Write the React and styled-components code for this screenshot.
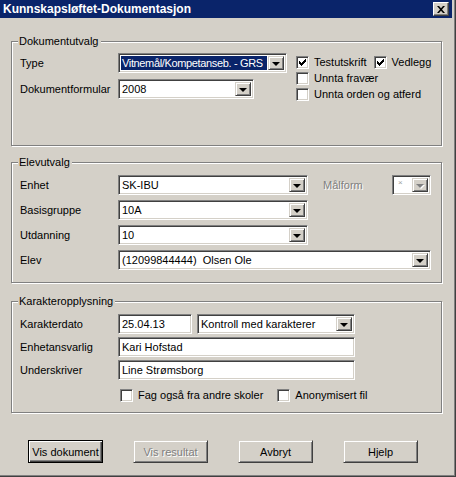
import React from 'react';
import styled, { createGlobalStyle } from 'styled-components';

const GlobalStyle = createGlobalStyle`
  html, body {
    margin: 0;
    padding: 0;
    background: #d4d0c8;
  }
  body {
    font-family: "Liberation Sans", Arial, sans-serif;
    font-size: 11px;
    color: #000;
  }
`;

const Window = styled.div`
  width: 456px;
  height: 477px;
  box-sizing: border-box;
  background: #d4d0c8;
  border-right: 1px solid #404040;
  border-bottom: 1px solid #404040;
  box-shadow: inset -1px -1px 0 #808080;
  display: flex;
  flex-direction: column;
  padding-right: 3px;
`;

const TitleBar = styled.div`
  height: 18px;
  background: #0a246a;
  display: flex;
  align-items: center;
  justify-content: space-between;
  padding: 0 3px 0 3px;
`;

const Title = styled.span`
  color: #fff;
  font-weight: bold;
  font-size: 12px;
`;

const CloseBtn = styled.div`
  width: 16px;
  height: 14px;
  box-sizing: border-box;
  background: #d4d0c8;
  border-top: 1px solid #fff;
  border-left: 1px solid #fff;
  border-right: 1px solid #404040;
  border-bottom: 1px solid #404040;
  box-shadow: inset -1px -1px 0 #808080;
  display: flex;
  align-items: center;
  justify-content: center;
`;

const Content = styled.div`
  padding: 23px 0 0 11px;
  display: flex;
  flex-direction: column;
`;

const Group = styled.div`
  position: relative;
  width: 431px;
  height: ${p => p.$h}px;
  box-sizing: border-box;
  border: 1px solid #808080;
  box-shadow: inset 1px 1px 0 #fff, 1px 1px 0 #fff;
  margin-bottom: ${p => p.$mb || 0}px;
  padding: ${p => p.$pt}px 0 0 8px;
`;

const Legend = styled.span`
  position: absolute;
  top: -7px;
  left: 6px;
  padding: 0 2px 0 1px;
  background: #d4d0c8;
  line-height: 13px;
`;

const GroupRow = styled.div`
  display: flex;
  align-items: flex-start;
`;

const Form = styled.div`
  display: grid;
  grid-template-columns: ${p => p.$cols};
  row-gap: ${p => p.$gap}px;
  grid-auto-rows: 20px;
  align-items: center;
`;

const Label = styled.span`
  white-space: nowrap;
  color: ${p => (p.$disabled ? '#808080' : '#000')};
  text-shadow: ${p => (p.$disabled ? '1px 1px 0 #fff' : 'none')};
`;

const Spacer = styled.span`
  grid-column: ${p => p.$span || 'auto'};
`;

const Field = styled.div`
  grid-column: ${p => p.$span || 'auto'};
  width: ${p => (p.$w ? `${p.$w}px` : 'auto')};
  height: 20px;
  box-sizing: border-box;
  background: #fff;
  border-top: 1px solid #808080;
  border-left: 1px solid #808080;
  border-right: 1px solid #fff;
  border-bottom: 1px solid #fff;
  box-shadow: inset 1px 1px 0 #404040, inset -1px -1px 0 #d4d0c8;
  display: flex;
  align-items: stretch;
  padding: 2px;
`;

const FieldText = styled.div`
  flex: 1;
  min-width: 0;
  display: flex;
  align-items: center;
  padding-left: 1px;
  white-space: nowrap;
  overflow: hidden;
`;

const Highlight = styled.span`
  flex: 1;
  min-width: 0;
  display: flex;
  align-items: center;
  padding-left: 1px;
  margin-right: 1px;
  background: #0a246a;
  color: #fff;
  white-space: nowrap;
  overflow: hidden;
  letter-spacing: -0.35px;
`;

const Tiny = styled.span`
  font-size: 8px;
  color: #a0a0a0;
  align-self: flex-start;
  padding-left: 2px;
`;

const DropBtn = styled.div`
  width: 16px;
  flex: none;
  box-sizing: border-box;
  background: #d4d0c8;
  border-top: 1px solid #d4d0c8;
  border-left: 1px solid #d4d0c8;
  border-right: 1px solid #404040;
  border-bottom: 1px solid #404040;
  box-shadow: inset 1px 1px 0 #fff, inset -1px -1px 0 #808080;
  display: flex;
  align-items: center;
  justify-content: center;
`;

const Arrow = styled.span`
  width: 0;
  height: 0;
  border-left: 4px solid transparent;
  border-right: 4px solid transparent;
  border-top: 4px solid ${p => (p.$disabled ? '#808080' : '#000')};
  margin-top: 1px;
  filter: ${p => (p.$disabled ? 'drop-shadow(1px 1px 0 #fff)' : 'none')};
`;

const Checks = styled.div`
  display: flex;
  flex-direction: column;
  margin-left: 9px;
  padding-top: 1px;
`;

const CheckRow = styled.div`
  display: flex;
  align-items: center;
  height: 16px;
  grid-column: ${p => p.$span || 'auto'};
  align-self: ${p => (p.$end ? 'end' : 'auto')};
  padding-left: ${p => p.$pl || 0}px;
`;

const CheckItem = styled.label`
  display: flex;
  align-items: center;
  gap: 5px;
  margin-right: ${p => p.$mr || 0}px;
  white-space: nowrap;
`;

const Box = styled.span`
  width: 13px;
  height: 13px;
  box-sizing: border-box;
  background: #fff;
  border-top: 1px solid #808080;
  border-left: 1px solid #808080;
  border-right: 1px solid #fff;
  border-bottom: 1px solid #fff;
  box-shadow: inset 1px 1px 0 #404040, inset -1px -1px 0 #d4d0c8;
  display: flex;
  align-items: center;
  justify-content: center;
`;

const Buttons = styled.div`
  display: flex;
  gap: 30px;
  padding-left: 17px;
  margin-top: 27px;
`;

const Button = styled.div`
  width: 75px;
  height: 23px;
  box-sizing: border-box;
  background: #d4d0c8;
  border: 1px solid ${p => (p.$default ? '#000' : '#d4d0c8')};
  border-right-color: ${p => (p.$default ? '#000' : '#404040')};
  border-bottom-color: ${p => (p.$default ? '#000' : '#404040')};
  box-shadow: ${p =>
    p.$default
      ? 'inset 1px 1px 0 #fff, inset -1px -1px 0 #404040, inset -2px -2px 0 #808080'
      : 'inset 1px 1px 0 #fff, inset -1px -1px 0 #808080'};
  display: flex;
  align-items: center;
  justify-content: center;
  color: ${p => (p.$disabled ? '#808080' : '#000')};
  text-shadow: ${p => (p.$disabled ? '1px 1px 0 #fff' : 'none')};
`;

function Check({ checked }) {
  return (
    <Box>
      {checked && (
        <svg width="7" height="7" viewBox="0 0 7 7">
          <path d="M0 2h1v1h1v1h1v-1h1v-1h1v-1h1v-1h1v3h-1v1h-1v1h-1v1h-1v1h-1v-1h-1v-1h-1z" fill="#000" />
        </svg>
      )}
    </Box>
  );
}

function Combo({ children, span, w, highlight, disabled }) {
  return (
    <Field $span={span} $w={w}>
      {highlight ? (
        <Highlight>{children}</Highlight>
      ) : disabled ? (
        <FieldText><Tiny>×</Tiny></FieldText>
      ) : (
        <FieldText>{children}</FieldText>
      )}
      <DropBtn>
        <Arrow $disabled={disabled} />
      </DropBtn>
    </Field>
  );
}

function Input({ children, span }) {
  return (
    <Field $span={span}>
      <FieldText>{children}</FieldText>
    </Field>
  );
}

export default function App() {
  return (
    <>
      <GlobalStyle />
      <Window>
        <TitleBar>
          <Title>Kunnskapsløftet-Dokumentasjon</Title>
          <CloseBtn>
            <svg width="8" height="7" viewBox="0 0 8 7">
              <path d="M0 0h2l2 2.2 2-2.2h2l-3 3.5 3 3.5h-2l-2-2.2-2 2.2h-2l3-3.5z" fill="#000" />
            </svg>
          </CloseBtn>
        </TitleBar>

        <Content>
          <Group $h={105} $mb={16} $pt={11}>
            <Legend>Dokumentutvalg</Legend>
            <GroupRow>
              <Form $cols="98px 169px" $gap={6}>
                <Label>Type</Label>
                <Combo highlight>Vitnemål/Kompetanseb. - GRS</Combo>
                <Label>Dokumentformular</Label>
                <Combo w={136}>2008</Combo>
              </Form>
              <Checks>
                <CheckRow>
                  <CheckItem $mr={7}><Check checked />Testutskrift</CheckItem>
                  <CheckItem><Check checked />Vedlegg</CheckItem>
                </CheckRow>
                <CheckRow>
                  <CheckItem><Check />Unnta fravær</CheckItem>
                </CheckRow>
                <CheckRow>
                  <CheckItem><Check />Unnta orden og atferd</CheckItem>
                </CheckRow>
              </Checks>
            </GroupRow>
          </Group>

          <Group $h={121} $mb={18} $pt={12}>
            <Legend>Elevutvalg</Legend>
            <Form $cols="98px 190px 15px 69px 39px" $gap={5}>
              <Label>Enhet</Label>
              <Combo>SK-IBU</Combo>
              <Spacer />
              <Label $disabled>Målform</Label>
              <Combo disabled />
              <Label>Basisgruppe</Label>
              <Combo span="2 / 3">10A</Combo>
              <Spacer $span="3 / -1" />
              <Label>Utdanning</Label>
              <Combo span="2 / 3">10</Combo>
              <Spacer $span="3 / -1" />
              <Label>Elev</Label>
              <Combo span="2 / -1">(12099844444)&nbsp;&nbsp;Olsen Ole</Combo>
            </Form>
          </Group>

          <Group $h={112} $pt={12}>
            <Legend>Karakteropplysning</Legend>
            <Form $cols="98px 74px 5px 158px" $gap={3}>
              <Label>Karakterdato</Label>
              <Input>25.04.13</Input>
              <Spacer />
              <Combo>Kontroll med karakterer</Combo>
              <Label>Enhetansvarlig</Label>
              <Input span="2 / -1">Kari Hofstad</Input>
              <Label>Underskriver</Label>
              <Input span="2 / -1">Line Strømsborg</Input>
              <Spacer />
              <CheckRow $span="2 / -1" $pl={2} $end>
                <CheckItem $mr={14}><Check />Fag også fra andre skoler</CheckItem>
                <CheckItem><Check />Anonymisert fil</CheckItem>
              </CheckRow>
            </Form>
          </Group>

          <Buttons>
            <Button $default>Vis dokument</Button>
            <Button $disabled>Vis resultat</Button>
            <Button>Avbryt</Button>
            <Button>Hjelp</Button>
          </Buttons>
        </Content>
      </Window>
    </>
  );
}
